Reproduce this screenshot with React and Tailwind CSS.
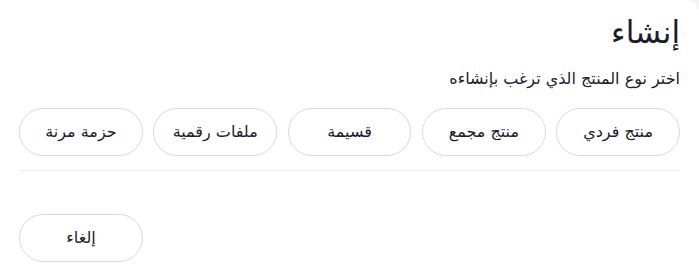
import React from 'react';

const types = ['منتج فردي', 'منتج مجمع', 'قسيمة', 'ملفات رقمية', 'حزمة مرنة'];

export default function App() {
  return (
    <div className="w-[699px] h-[274px] bg-[#f4f4f6]">
      <div
        dir="rtl"
        className="w-full h-full bg-white rounded-tr-[14px] px-[19px] pt-[12px] text-[#1e1b2e]"
        style={{ fontFamily: '"DejaVu Sans", "Noto Sans", sans-serif' }}
      >
        {/* Header */}
        <h2 className="text-[31px] leading-[40px] font-normal">إنشاء</h2>
        <p className="mt-[16px] text-[16px] leading-[22px]">اختر نوع المنتج الذي ترغب بإنشاءه</p>

        {/* Product types */}
        <div className="mt-[18px] flex gap-[10.5px]">
          {types.map((t) => (
            <button
              key={t}
              className="w-[124px] h-[48px] rounded-full border border-[#d9d6e2] bg-white text-[16px] text-[#1e1b2e]"
            >
              {t}
            </button>
          ))}
        </div>

        <div className="mt-[14px] h-px bg-[#efeef3]" />

        {/* Footer */}
        <div className="mt-[43px] flex justify-end">
          <button className="w-[124px] h-[48px] rounded-full border border-[#d9d6e2] bg-white text-[16px] text-[#1e1b2e]">
            إلغاء
          </button>
        </div>
      </div>
    </div>
  );
}
